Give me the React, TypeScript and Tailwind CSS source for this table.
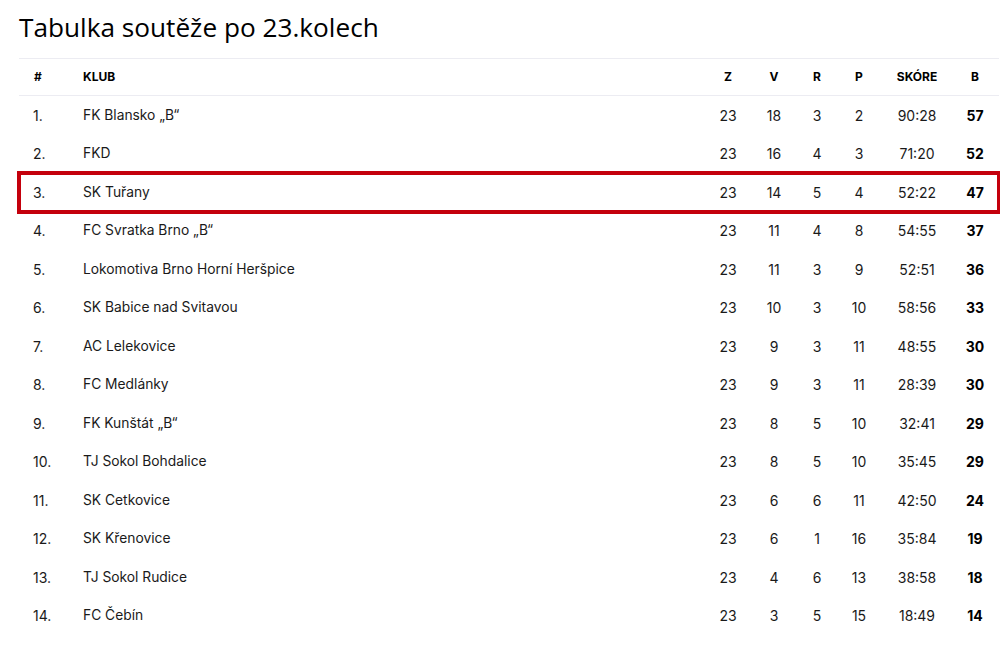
import React from "react";

const rows: [string, string, number, number, number, number, string, number][] = [
  ["1.", "FK Blansko „B“", 23, 18, 3, 2, "90:28", 57],
  ["2.", "FKD", 23, 16, 4, 3, "71:20", 52],
  ["3.", "SK Tuřany", 23, 14, 5, 4, "52:22", 47],
  ["4.", "FC Svratka Brno „B“", 23, 11, 4, 8, "54:55", 37],
  ["5.", "Lokomotiva Brno Horní Heršpice", 23, 11, 3, 9, "52:51", 36],
  ["6.", "SK Babice nad Svitavou", 23, 10, 3, 10, "58:56", 33],
  ["7.", "AC Lelekovice", 23, 9, 3, 11, "48:55", 30],
  ["8.", "FC Medlánky", 23, 9, 3, 11, "28:39", 30],
  ["9.", "FK Kunštát „B“", 23, 8, 5, 10, "32:41", 29],
  ["10.", "TJ Sokol Bohdalice", 23, 8, 5, 10, "35:45", 29],
  ["11.", "SK Cetkovice", 23, 6, 6, 11, "42:50", 24],
  ["12.", "SK Křenovice", 23, 6, 1, 16, "35:84", 19],
  ["13.", "TJ Sokol Rudice", 23, 4, 6, 13, "38:58", 18],
  ["14.", "FC Čebín", 23, 3, 5, 15, "18:49", 14],
];

const grid =
  "grid grid-cols-[64px_623px_44px_48px_38px_46px_70px_46px] items-center";

export default function App() {
  return (
    <div className="w-[1000px] h-[646px] bg-white pl-[19px] text-[#1a1a1a]">
      <h1
        className="text-[26.2px] leading-[32px] pt-[11px] text-black"
        style={{ fontFamily: '"Open Sans", "Noto Sans", sans-serif' }}
      >
        Tabulka soutěže po 23.kolech
      </h1>
      <div
        className="mt-[15px] w-[980px] text-[14px]"
        style={{ fontFamily: 'Inter, "Noto Sans", sans-serif' }}
      >
        <div
          className={`${grid} h-[38px] border-y border-[#ececf2] text-[12px] font-bold text-black`}
        >
          <div className="pl-[15px]">#</div>
          <div>KLUB</div>
          <div className="text-center">Z</div>
          <div className="text-center">V</div>
          <div className="text-center">R</div>
          <div className="text-center">P</div>
          <div className="text-center">SKÓRE</div>
          <div className="text-center">B</div>
        </div>
        {rows.map((r, i) => (
          <div
            key={i}
            className={`${grid} h-[38.5px] ${
              i === 2
                ? "outline-4 outline-solid outline-[#c4000c] -outline-offset-2"
                : ""
            }`}
          >
            <div className="pl-[14px]">{r[0]}</div>
            <div className="text-[13.8px]">{r[1]}</div>
            <div className="text-center">{r[2]}</div>
            <div className="text-center">{r[3]}</div>
            <div className="text-center">{r[4]}</div>
            <div className="text-center">{r[5]}</div>
            <div className="text-center">{r[6]}</div>
            <div className="text-center font-bold text-black">{r[7]}</div>
          </div>
        ))}
      </div>
    </div>
  );
}
